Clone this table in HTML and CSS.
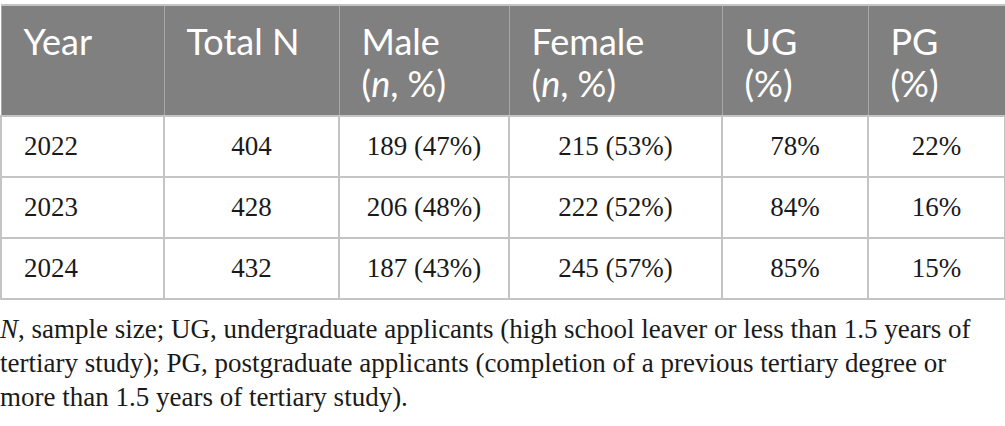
FILE: index.html
```html
<!DOCTYPE html>
<html lang="en">
<head>
    <meta charset="UTF-8">
    <title>Applicant demographics by year</title>
    <link rel="stylesheet" href="styles.css">
</head>
<body>
    <table class="data-table">
        <colgroup>
            <col class="c-year">
            <col class="c-total">
            <col class="c-male">
            <col class="c-female">
            <col class="c-ug">
            <col class="c-pg">
        </colgroup>
        <thead>
            <tr>
                <th>Year</th>
                <th>Total N</th>
                <th>Male<br>(<em>n</em>, %)</th>
                <th>Female<br>(<em>n</em>, %)</th>
                <th>UG<br>(%)</th>
                <th>PG<br>(%)</th>
            </tr>
        </thead>
        <tbody>
            <tr>
                <td class="year">2022</td>
                <td>404</td>
                <td>189 (47%)</td>
                <td>215 (53%)</td>
                <td>78%</td>
                <td>22%</td>
            </tr>
            <tr>
                <td class="year">2023</td>
                <td>428</td>
                <td>206 (48%)</td>
                <td>222 (52%)</td>
                <td>84%</td>
                <td>16%</td>
            </tr>
            <tr>
                <td class="year">2024</td>
                <td>432</td>
                <td>187 (43%)</td>
                <td>245 (57%)</td>
                <td>85%</td>
                <td>15%</td>
            </tr>
        </tbody>
    </table>

    <p class="table-note">
        <em>N</em>, sample size; UG, undergraduate applicants (high school leaver or less than 1.5 years of<br>
        tertiary study); PG, postgraduate applicants (completion of a previous tertiary degree or<br>
        more than 1.5 years of tertiary study).
    </p>
</body>
</html>
```

FILE: styles.css
```css
body {
    margin: 0;
    padding: 4px 0 0 0;
    background: white;
    font-family: "Liberation Serif", "Times New Roman", serif;
    color: #1a1a1a;
}

.data-table {
    width: 1004px;
    border-collapse: collapse;
    table-layout: fixed;
}

.c-year { width: 163px; }
.c-total { width: 175px; }
.c-male { width: 170px; }
.c-female { width: 213px; }
.c-ug { width: 146px; }
.c-pg { width: 137px; }

.data-table th {
    background: #808080;
    color: white;
    font-family: Lato, "Open Sans", sans-serif;
    font-weight: 400;
    font-size: 36px;
    line-height: 42px;
    text-align: left;
    vertical-align: top;
    padding: 14px 10px 11px 22px;
    height: 84px;
    border: 1px solid #a8a8a8;
    border-top: 2px solid #c4c4c4;
}

.data-table th em {
    font-style: italic;
}

.data-table td {
    font-size: 27px;
    height: 59px;
    padding: 0 10px;
    text-align: center;
    vertical-align: middle;
    border: 2px solid #c4c4c4;
}

.data-table td.year {
    text-align: left;
    padding-left: 22px;
}

.table-note {
    margin: 12px 0 0 0;
    font-size: 27px;
    line-height: 34px;
    white-space: nowrap;
    color: #1a1a1a;
}
```
